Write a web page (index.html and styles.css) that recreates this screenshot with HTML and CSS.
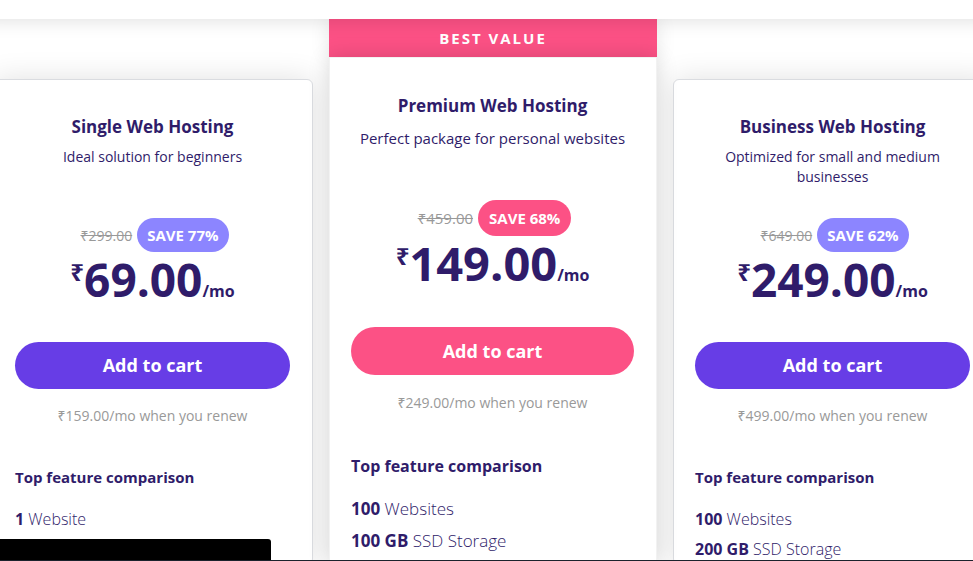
FILE: index.html
```html
<!DOCTYPE html>
<html lang="en">
<head>
<meta charset="utf-8">
<title>Web Hosting Plans</title>
<link rel="stylesheet" href="styles.css">
</head>
<body>
<header class="topbar"></header>
<main class="plans">
  <article class="plan">
    <div class="card">
      <h2 class="title">Single Web Hosting</h2>
      <p class="tagline">Ideal solution for beginners</p>
      <div class="deal"><s class="old">₹299.00</s><span class="save">SAVE 77%</span></div>
      <p class="price"><span class="currency">₹</span><span class="amount">69.00</span><span class="period">/mo</span></p>
      <button class="cart" type="button">Add to cart</button>
      <p class="renew">₹159.00/mo when you renew</p>
      <h3 class="subtitle">Top feature comparison</h3>
      <ul class="features">
        <li><b>1</b> Website</li>
      </ul>
    </div>
  </article>
  <article class="plan featured">
    <p class="banner">BEST VALUE</p>
    <div class="card">
      <h2 class="title">Premium Web Hosting</h2>
      <p class="tagline">Perfect package for personal websites</p>
      <div class="deal"><s class="old">₹459.00</s><span class="save">SAVE 68%</span></div>
      <p class="price"><span class="currency">₹</span><span class="amount">149.00</span><span class="period">/mo</span></p>
      <button class="cart" type="button">Add to cart</button>
      <p class="renew">₹249.00/mo when you renew</p>
      <h3 class="subtitle">Top feature comparison</h3>
      <ul class="features">
        <li><b>100</b> Websites</li>
        <li><b>100 GB</b> SSD Storage</li>
      </ul>
    </div>
  </article>
  <article class="plan">
    <div class="card">
      <h2 class="title">Business Web Hosting</h2>
      <p class="tagline">Optimized for small and medium businesses</p>
      <div class="deal"><s class="old">₹649.00</s><span class="save">SAVE 62%</span></div>
      <p class="price"><span class="currency">₹</span><span class="amount">249.00</span><span class="period">/mo</span></p>
      <button class="cart" type="button">Add to cart</button>
      <p class="renew">₹499.00/mo when you renew</p>
      <h3 class="subtitle">Top feature comparison</h3>
      <ul class="features">
        <li><b>100</b> Websites</li>
        <li><b>200 GB</b> SSD Storage</li>
      </ul>
    </div>
  </article>
</main>
<div class="status"></div>
<footer class="edge"></footer>
</body>
</html>
```
FILE: styles.css
```css
* {
  box-sizing: border-box;
}

body {
  margin: 0;
  height: 100vh;
  display: flex;
  flex-direction: column;
  overflow: hidden;
  position: relative;
  background: #fff;
  color: #2f1c6a;
  font-family: "Open Sans", "Noto Sans", sans-serif;
}

h2, h3, p, ul {
  margin: 0;
  padding: 0;
}

.topbar {
  flex: none;
  height: 19px;
  margin: 0 -20px;
  background: #fff;
  box-shadow: 0 0 20px rgba(0, 0, 0, 0.15);
  position: relative;
  z-index: 3;
}

.plans {
  flex: 1;
  min-height: 0;
  display: grid;
  grid-template-columns: 320fr 328fr 320fr;
  gap: 16px;
  margin: 0 -20px 0 -7px;
}

.plan {
  display: flex;
  flex-direction: column;
  padding-top: 60px;
}

.card {
  flex: 1;
  display: flex;
  flex-direction: column;
  padding: 35px 22px 0 21px;
  background: #fff;
  border: 1px solid #dadce0;
  border-radius: 6px;
  box-shadow: 0 0 30px rgba(0, 0, 0, 0.12);
}

.title {
  font-size: 17px;
  line-height: 24px;
  font-weight: 700;
  text-align: center;
}

.tagline {
  min-height: 40px;
  margin-top: 8px;
  padding: 0 20px;
  font-size: 14px;
  line-height: 20px;
  text-align: center;
}

.deal {
  display: flex;
  justify-content: center;
  align-items: center;
  gap: 5px;
  margin-top: 31px;
  padding-left: 4px;
}

.old {
  color: #999;
  font-size: 14px;
}

.save {
  padding: 0 10px;
  border-radius: 18px;
  background: #8c85ff;
  color: #fff;
  font-size: 15px;
  line-height: 34px;
  font-weight: 700;
}

.price {
  display: flex;
  justify-content: center;
  align-items: baseline;
  height: 56px;
  font-weight: 700;
  line-height: 54px;
}

.currency {
  align-self: flex-start;
  font-size: 24px;
  line-height: 40px;
}

.amount {
  font-size: 46px;
}

.period {
  font-size: 16px;
}

.cart {
  margin-top: 34px;
  padding: 0;
  border: 0;
  border-radius: 24px;
  background: #673de6;
  color: #fff;
  font-family: inherit;
  font-size: 18px;
  line-height: 47px;
  font-weight: 700;
}

.renew {
  margin-top: 15px;
  color: #999;
  font-size: 14px;
  line-height: 24px;
  text-align: center;
}

.subtitle {
  margin-top: 37px;
  font-size: 15px;
  line-height: 24px;
  font-weight: 700;
}

.features {
  margin-top: 15px;
  list-style: none;
  font-size: 16px;
  line-height: 30px;
  font-weight: 300;
}

.features b {
  font-weight: 700;
}

.featured {
  padding-top: 0;
  position: relative;
  z-index: 2;
}

.banner {
  background: #fc5185;
  color: #fff;
  font-size: 15px;
  line-height: 38px;
  font-weight: 700;
  letter-spacing: 2px;
  text-align: center;
  box-shadow: 0 0 20px rgba(0, 0, 0, 0.1);
}

.featured .card {
  padding-top: 36px;
  border-color: #f2f2f2;
  border-radius: 0;
  box-shadow: 0 0 20px rgba(0, 0, 0, 0.16);
}

.featured .tagline {
  margin-top: 10px;
  padding: 0;
  font-size: 15px;
}

.featured .deal {
  margin-top: 32px;
}

.featured .old {
  font-size: 15px;
}

.featured .save {
  padding: 0 11px;
  background: #fc5185;
  line-height: 36px;
}

.featured .price {
  height: 58px;
}

.featured .amount {
  font-size: 47px;
}

.featured .cart {
  margin-top: 33px;
  background: #fc5185;
  line-height: 48px;
}

.featured .renew {
  margin-top: 16px;
}

.featured .subtitle {
  margin-top: 39px;
  font-size: 16px;
}

.featured .features {
  font-size: 17px;
  line-height: 32px;
}

.status {
  position: absolute;
  left: 0;
  bottom: 1px;
  z-index: 4;
  width: 271px;
  height: 21px;
  border-top-right-radius: 3px;
  background: #000;
}

.edge {
  flex: none;
  height: 1px;
  background: #1b222c;
  position: relative;
  z-index: 5;
}
```
